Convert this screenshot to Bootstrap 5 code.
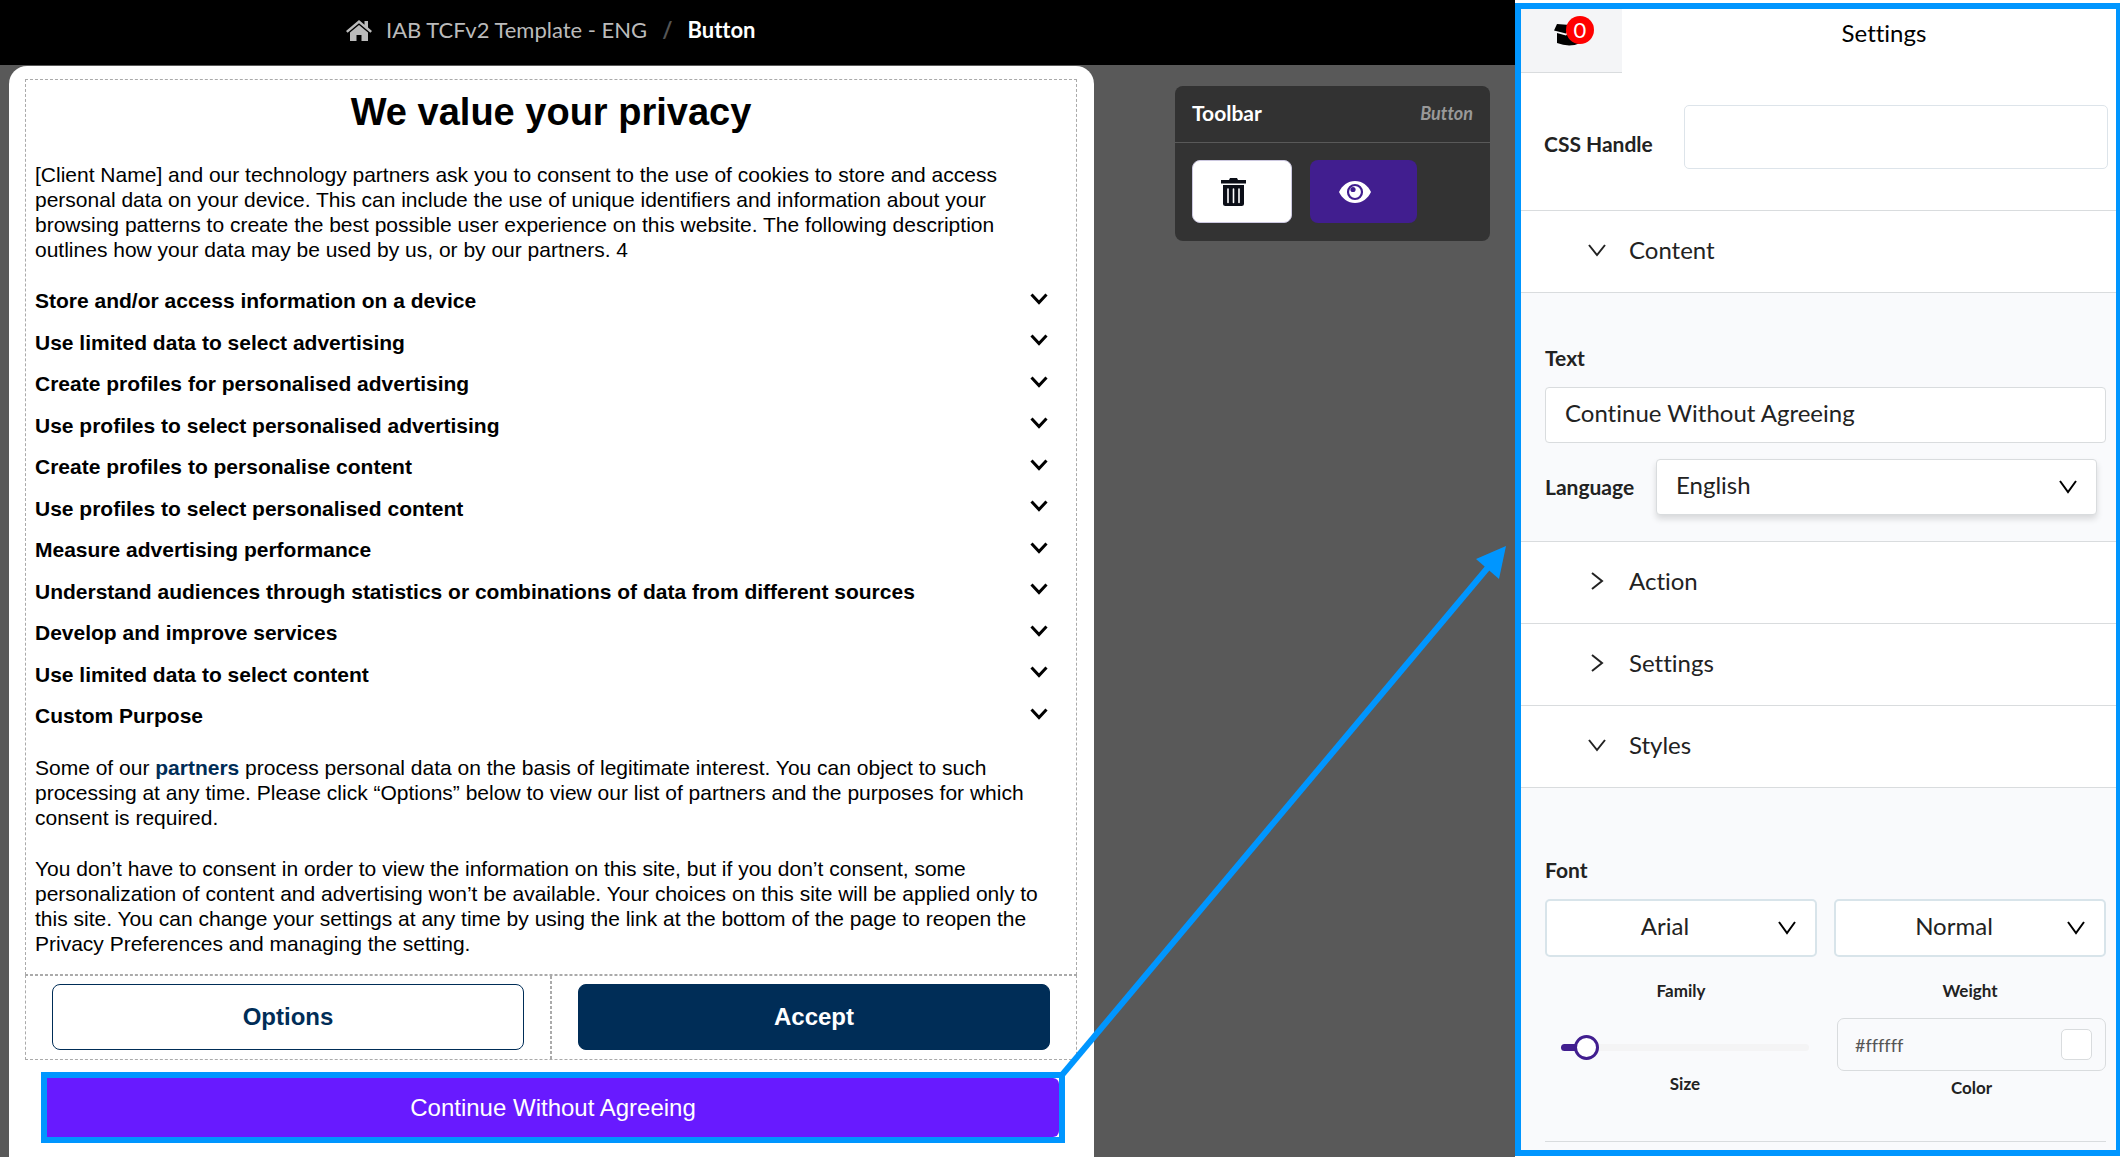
<!DOCTYPE html>
<html lang="en">
<head>
<meta charset="utf-8">
<meta name="viewport" content="width=device-width, initial-scale=1">
<title>IAB TCFv2 Template - ENG / Button</title>
<link href="https://cdn.jsdelivr.net/npm/bootstrap@5.3.0/dist/css/bootstrap.min.css" rel="stylesheet">
<style>
  :root { --hl: #0096ff; --navy: #002d57; --violet: #411e8f; --line: #d9dcde; --ink: #222; }
  * { font-feature-settings: "liga" 0, "clig" 0, "calt" 0, "dlig" 0; }
  body { font-family: Lato, "Open Sans", sans-serif; background: #595959; color: var(--ink); min-height: 100vh; line-height: 24px; }
  .topbar { background: #000; height: 65px; padding-left: 346px; padding-bottom: 5px; font-size: 22px; gap: 14px; }
  .topbar a { color: #bbb; }
  .topbar .breadcrumb { --bs-breadcrumb-divider-color: #555; --bs-breadcrumb-item-padding-x: 15px; }
  .topbar .breadcrumb-item.active { color: #fff; }
  .stage { padding: 1px 25px 0 9px; gap: 81px; }
  .notice { background: #fff; color: #000; border-radius: 18px 18px 0 0; padding: 13px 17px 0 16px; font-family: "Liberation Sans", Arial, sans-serif; font-size: 21px; line-height: 25px; min-width: 0; }
  .notice h1 { font-size: 38px; line-height: 46px; font-weight: 700; margin: 9px 0 27px 17px; }
  .zone { border: 1px dashed #aaa; }
  .copy { padding: 0 26px 18px 9px; }
  .copy p { margin-bottom: 26px; }
  .purposes { height: 440px; margin-bottom: 27px; }
  .purposes button { font-weight: 700; color: #000; line-height: 25px; }
  .purposes svg { margin-right: 2px; }
  .copy a { color: var(--navy); font-weight: 700; }
  .choice { padding: 8px 26px 9px; }
  .choice .btn { height: 66px; font-size: 24px; font-weight: 700; border-radius: 8px; border-color: var(--navy); }
  .choice-left { border-right: 1px dashed #aaa; }
  .choice-right { border-left: 1px dashed #aaa; }
  .btn-options { color: var(--navy); background: #fff; }
  .btn-accept { color: #fff; background: var(--navy); }
  .picked { border: 6px solid var(--hl); margin: 12px 12px 13px 16px; }
  .picked .btn { background: #681aff; color: #fff; font-size: 24px; height: 59px; border: 0; border-radius: 0 6px 6px 0; }
  .toolbox { width: 315px; margin-top: 20px; background: #333; border: 0; border-radius: 8px; color: #fff; overflow: hidden; }
  .toolbox .card-header { padding: 15px 17px 17px; border-bottom: 1px solid #595959; font-size: 21px; font-weight: 700; }
  .toolbox em { font-size: 18px; color: #999; }
  .toolbox .card-body { padding: 17px 17px 18px; gap: 18px; }
  .toolbox .btn { height: 63px; border-radius: 8px; padding: 0 28px; }
  .btn-trash { width: 100px; background: #fff; border: 1px solid #ccc8e0; }
  .btn-eye { width: 107px; background: var(--violet); }
  .panel-side { width: 605px; background: #fff; padding: 3px 0 1px; }
  .framed { border: 6px solid var(--hl); border-right-width: 4px; background: #f9fafc; min-width: 0; }
  .tabs-row, .handle { background: #fff; }
  .tab-basket { width: 101px; height: 64px; background: #f4f5f7; border-bottom: 1px solid var(--line) !important; padding: 0 0 12px 33px; }
  .count { left: 12px; top: -8px; width: 28px; height: 28px; background: #f00; color: #fff; font-size: 22px; line-height: 27px; }
  .tab-title { font-size: 24px; color: #000; padding: 0 0 16px 30px; }
  .lbl { font-size: 21px; font-weight: 700; }
  .handle { padding: 32px 8px 41px 23px; gap: 28px; border-bottom: 1px solid var(--line); }
  .handle .lbl { width: 112px; padding-top: 14px; white-space: nowrap; }
  .handle input { height: 64px; border: 1px solid #dde4ea; border-radius: 5px; }
  .fold { font-size: 24px; height: 82px; padding: 0 0 4px 62px; gap: 18px; border: 0; border-bottom: 1px solid var(--line); color: var(--ink); background: #fff; width: 100%; }
  .fields { padding: 0 10px 0 24px; }
  .content-fields { padding-top: 53px; padding-bottom: 26px; border-bottom: 1px solid var(--line); }
  .content-fields .lbl-top { margin-bottom: 17px; }
  .style-fields { padding-top: 70px; }
  .style-fields .lbl { margin-bottom: 17px; }
  .box, .pick { font-size: 24px; line-height: 32px; color: var(--ink); border: 1px solid var(--line); border-radius: 4px; height: 56px; padding: 0 19px 5px; background-color: #fff; }
  .pick { appearance: none; background: #fff url("data:image/svg+xml,%3Csvg xmlns='http://www.w3.org/2000/svg' width='18' height='14' fill='none' stroke='%23000' stroke-width='2'%3E%3Cpath d='M1 1l8 11 8-11'/%3E%3C/svg%3E") no-repeat right 19px center; }
  .lang-row { margin-top: 16px; }
  .lang-row .lbl { width: 95px; }
  .pick-wide { box-shadow: 0 4px 6px #0002; margin-right: 9px; }
  .pick-mid { border: 2px solid #d8e4ea; border-radius: 5px; height: 58px; text-align: center; text-align-last: center; padding: 0 50px 5px 18px; }
  .pairs { display: grid; grid-template-columns: repeat(2, minmax(0, 1fr)); column-gap: 17px; }
  .cap { font-size: 17px; font-weight: 700; line-height: 20px; display: block; }
  .cap-far { margin: 24px 0 17px; }
  .size-cell { padding: 16px 8px 0 16px; }
  .size-cell .cap { margin-top: 14px; }
  .color-cell { padding-left: 3px; }
  .color-cell .cap { margin-top: 7px; }
  .sizer { appearance: none; background: none; height: 26px; display: block; width: 100%; margin: 0; }
  .sizer::-webkit-slider-runnable-track { height: 7px; border-radius: 4px; background: linear-gradient(90deg, var(--violet) 10%, #f4f4f5 10%); }
  .sizer::-webkit-slider-thumb { appearance: none; width: 25px; height: 25px; margin-top: -9px; border: 3px solid var(--violet); border-radius: 50%; background: #fff; }
  .hexbox { border: 1px solid var(--line); border-radius: 7px; height: 53px; padding: 0 13px 0 17px; }
  .hexbox input { border: 0; background: none; min-width: 0; font-size: 18px; color: #555; padding: 0; }
  .swatch { width: 31px; height: 31px; border: 1px solid var(--line); border-radius: 5px; background: #fff; padding: 0; flex: none; }
  .rule { margin: 43px 0 7px; border-top: 1px solid var(--line); opacity: 1; }
  .arrow { left: 1040px; top: 530px; pointer-events: none; }
</style>
</head>
<body class="d-flex position-relative">
<main class="flex-grow-1 d-flex flex-column">
  <nav class="topbar d-flex align-items-center" aria-label="breadcrumb">
    <a href="#" class="d-flex" aria-label="Home"><svg width="26" height="21" viewBox="0 0 26 21" fill="#bbb"><path d="M13 0 0 11l1.6 1.8L13 3.300l11.400 9.500L26 11l-4-3.400V1h-3.500v3.700z"/><path d="M13 5 4 12.500V21h6.500v-6h5v6H22v-8.500z"/></svg></a>
    <ol class="breadcrumb mb-0">
      <li class="breadcrumb-item"><a href="#" class="text-decoration-none">IAB TCFv2 Template - ENG</a></li>
      <li class="breadcrumb-item active fw-bold" aria-current="page">Button</li>
    </ol>
  </nav>
  <div class="stage d-flex flex-grow-1">
    <section class="notice flex-grow-1">
      <div class="zone">
        <div class="copy">
          <h1 class="text-center">We value your privacy</h1>
          <p>[Client Name] and our technology partners ask you to consent to the use of cookies to store and access personal data on your device. This can include the use of unique identifiers and information about your browsing patterns to create the best possible user experience on this website. The following description outlines how your data may be used by us, or by our partners. 4</p>
          <div class="purposes d-flex flex-column justify-content-between" id="purposes"></div>
          <p>Some of our <a href="#" class="text-decoration-none">partners</a> process personal data on the basis of legitimate interest. You can object to such processing at any time. Please click “Options” below to view our list of partners and the purposes for which consent is required.</p>
          <p class="mb-0">You don’t have to consent in order to view the information on this site, but if you don’t consent, some personalization of content and advertising won’t be available. Your choices on this site will be applied only to this site. You can change your settings at any time by using the link at the bottom of the page to reopen the Privacy Preferences and managing the setting.</p>
        </div>
      </div>
      <div class="d-flex zone">
        <div class="choice choice-left w-50"><button class="btn btn-options w-100">Options</button></div>
        <div class="choice choice-right w-50"><button class="btn btn-accept w-100">Accept</button></div>
      </div>
      <div class="picked"><button class="btn w-100">Continue Without Agreeing</button></div>
    </section>
    <div class="toolbox card align-self-start flex-shrink-0">
      <div class="card-header d-flex justify-content-between"><span>Toolbar</span><em>Button</em></div>
      <div class="card-body d-flex">
        <button class="btn btn-trash d-flex align-items-center" aria-label="Delete"><svg width="25" height="28" viewBox="0 0 25 28"><path fill="#0b0e17" d="M0 2h8l1-2h7l1 2h8v3.500H0zM2 7h21v18.500A2.500 2.500 0 0 1 20.500 28h-16A2.500 2.500 0 0 1 2 25.500z"/><path stroke="#fff" stroke-width="1.600" stroke-linecap="round" d="M7 11v13.500M12.500 11v13.500M18 11v13.500"/></svg></button>
        <button class="btn btn-eye d-flex align-items-center" aria-label="Preview"><svg width="32" height="22" viewBox="0 0 32 22"><path fill="#fff" d="M16 0C9 0 3 4.500 0 11c3 6.500 9 11 16 11s13-4.500 16-11C29 4.500 23 0 16 0z"/><circle cx="16" cy="11" r="7" fill="#fff" stroke="#411e8f" stroke-width="2.200"/><circle cx="14" cy="8.500" r="2.600" fill="#411e8f"/></svg></button>
      </div>
    </div>
  </div>
</main>
<aside class="panel-side flex-shrink-0 d-flex">
  <div class="framed flex-grow-1">
    <div class="tabs-row d-flex">
      <button class="tab-basket border-0 d-flex align-items-center" aria-label="Basket"><span class="position-relative d-block"><svg class="d-block" width="32" height="22" viewBox="0 0 32 22"><path d="M3 0l13 1-4 8.500L0 6.500zM3 9l9 2.500L16 8l12 1v9.500Q16 24 3 19z"/></svg><span class="count position-absolute rounded-circle text-center">0</span></span></button>
      <div class="tab-title flex-grow-1 d-flex align-items-center justify-content-center">Settings</div>
    </div>
    <div class="handle d-flex align-items-center">
      <label class="lbl" for="css">CSS Handle</label>
      <input id="css" type="text" class="flex-grow-1">
    </div>
    <button class="fold d-flex align-items-center"><svg width="28" height="20" viewBox="0 0 28 20" fill="none" stroke="#222" stroke-width="2"><path d="M6 5l8 10 8-10"/></svg>Content</button>
    <div class="fields content-fields">
      <label class="lbl lbl-top d-block" for="txt">Text</label>
      <input id="txt" class="box w-100 d-block" value="Continue Without Agreeing">
      <div class="lang-row d-flex align-items-center">
        <label class="lbl me-3" for="lang">Language</label>
        <select id="lang" class="pick pick-wide flex-grow-1"><option>English</option></select>
      </div>
    </div>
    <button class="fold d-flex align-items-center"><svg width="28" height="20" viewBox="0 0 28 20" fill="none" stroke="#222" stroke-width="2"><path d="M9 2l10 8-10 8"/></svg>Action</button>
    <button class="fold d-flex align-items-center"><svg width="28" height="20" viewBox="0 0 28 20" fill="none" stroke="#222" stroke-width="2"><path d="M9 2l10 8-10 8"/></svg>Settings</button>
    <button class="fold d-flex align-items-center"><svg width="28" height="20" viewBox="0 0 28 20" fill="none" stroke="#222" stroke-width="2"><path d="M6 5l8 10 8-10"/></svg>Styles</button>
    <div class="fields style-fields">
      <div class="lbl">Font</div>
      <div class="pairs text-center">
        <div><select id="fam" class="pick pick-mid w-100 d-block"><option>Arial</option></select><label class="cap cap-far" for="fam">Family</label></div>
        <div><select id="wgt" class="pick pick-mid w-100 d-block"><option>Normal</option></select><label class="cap cap-far" for="wgt">Weight</label></div>
      </div>
      <div class="pairs text-center">
        <div class="size-cell"><input id="size" type="range" class="sizer" min="0" max="100" value="6"><label class="cap" for="size">Size</label></div>
        <div class="color-cell"><div class="hexbox d-flex align-items-center"><input id="hex" type="text" class="flex-grow-1" value="#ffffff"><button class="swatch" aria-label="Pick color"></button></div><label class="cap" for="hex">Color</label></div>
      </div>
      <hr class="rule">
    </div>
  </div>
</aside>
<svg class="arrow position-absolute" width="480" height="560" viewBox="1040 530 480 560"><path d="M1062 1075L1490 565" stroke="#0096ff" stroke-width="6"/><path d="M1506 546l-7 33-23-20z" fill="#0096ff"/></svg>
<script>
  const names = ["Store and/or access information on a device","Use limited data to select advertising","Create profiles for personalised advertising","Use profiles to select personalised advertising","Create profiles to personalise content","Use profiles to select personalised content","Measure advertising performance","Understand audiences through statistics or combinations of data from different sources","Develop and improve services","Use limited data to select content","Custom Purpose"];
  document.getElementById("purposes").innerHTML = names.map(n => `<button class="d-flex justify-content-between align-items-center border-0 bg-transparent p-0">${n}<svg width="18" height="16" viewBox="0 0 18 16" fill="none" stroke="#000" stroke-width="3"><path d="M1.500 1.500L9 9.500l7.500-8"/></svg></button>`).join("");
</script>
<script src="https://cdn.jsdelivr.net/npm/bootstrap@5.3.0/dist/js/bootstrap.bundle.min.js"></script>
</body>
</html>
